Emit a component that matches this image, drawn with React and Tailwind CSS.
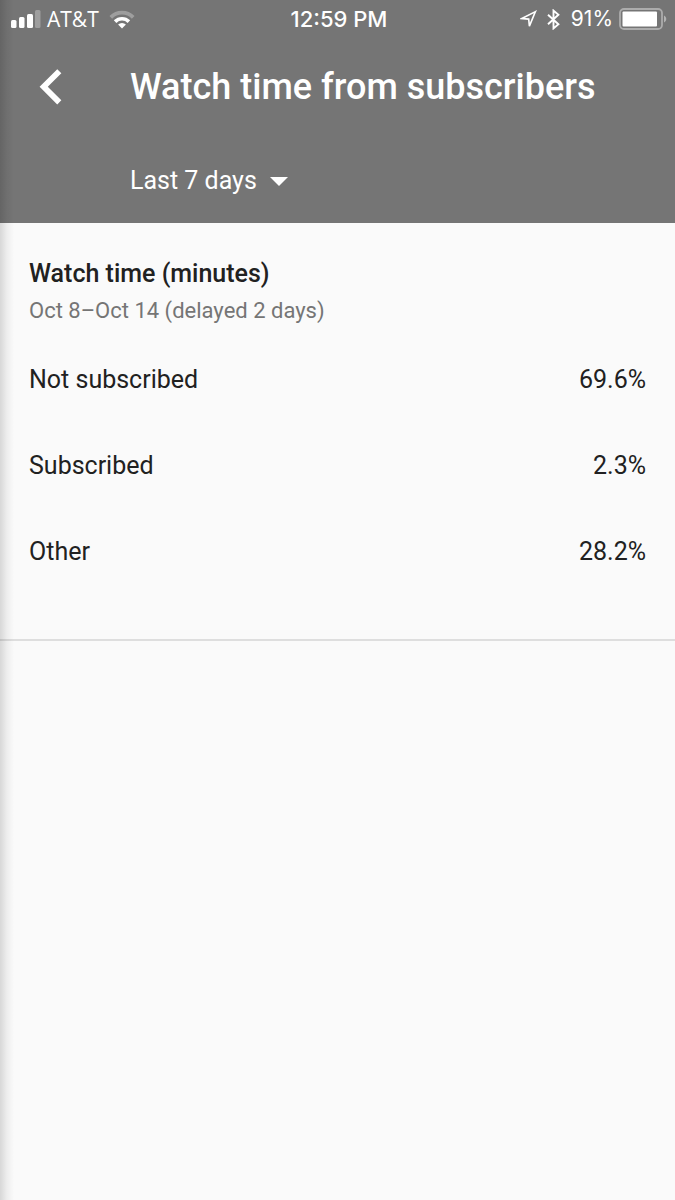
import { useState } from 'react';

const periods = ['Last 7 days', 'Last 28 days', 'Last 90 days', 'Last 365 days'];

const watchTime = [
  { label: 'Not subscribed', value: '69.6%' },
  { label: 'Subscribed', value: '2.3%' },
  { label: 'Other', value: '28.2%' },
];

function SignalIcon() {
  return (
    <svg width="30" height="18" viewBox="0 0 30 18" fill="currentColor" aria-hidden="true">
      <rect x="0" y="10" width="5.5" height="8" rx="1.5" />
      <rect x="8" y="7" width="5.5" height="11" rx="1.5" />
      <rect x="16" y="4" width="6" height="14" rx="1.5" />
      <rect x="24" y="0" width="5.5" height="18" rx="1.5" opacity="0.3" />
    </svg>
  );
}

function WifiIcon() {
  return (
    <svg width="26" height="19" viewBox="0 0 26 19" fill="none" stroke="currentColor" aria-hidden="true">
      <path d="M1.8 7.3a15.8 15.8 0 0 1 22.4 0" strokeWidth="3.8" opacity="0.3" />
      <path d="M6.1 11.6a9.8 9.8 0 0 1 13.8 0" strokeWidth="3.6" />
      <path d="M13 18.6l-3.9-4a5.5 5.5 0 0 1 7.8 0z" fill="currentColor" stroke="none" />
    </svg>
  );
}

function LocationIcon() {
  return (
    <svg width="17" height="18" viewBox="0 0 17 18" fill="none" stroke="currentColor" strokeWidth="1.6" aria-hidden="true">
      <path d="M15.4 1.6L1.8 8.5l6.9.6.7 7z" strokeLinejoin="miter" />
    </svg>
  );
}

function BluetoothIcon() {
  return (
    <svg width="13" height="21" viewBox="0 0 13 21" fill="none" stroke="currentColor" strokeWidth="1.9" aria-hidden="true">
      <path d="M1 5.8l10.4 9.5-4.9 4.1V1.6l4.9 4.1L1 15.2" />
    </svg>
  );
}

function BatteryIcon() {
  return (
    <svg width="48" height="22" viewBox="0 0 48 22" aria-hidden="true">
      <rect x="1" y="1" width="42" height="20" rx="4" fill="none" stroke="white" strokeWidth="1.8" opacity="0.4" />
      <rect x="3.5" y="3.5" width="34.5" height="15" rx="1" fill="white" />
      <path d="M45 7.5c3 1.6 3 5.4 0 7z" fill="white" opacity="0.45" />
    </svg>
  );
}

function StatusBar() {
  return (
    <div className="grid h-[38px] grid-cols-[1fr_auto_1fr] items-center pr-2 pl-[11px] font-['Inter',sans-serif] text-[22px] leading-8">
      <div className="flex items-center">
        <SignalIcon />
        <span className="mr-2.5 ml-1.5 font-['Open_Sans',sans-serif] text-[21px]">AT&amp;T</span>
        <WifiIcon />
      </div>
      <span className="font-medium">12:59 PM</span>
      <div className="flex items-center justify-end">
        <LocationIcon />
        <span className="mr-[11px] ml-2.5">
          <BluetoothIcon />
        </span>
        <span className="mr-1.5 text-[21px]">91%</span>
        <BatteryIcon />
      </div>
    </div>
  );
}

export default function App() {
  const [period, setPeriod] = useState('Last 7 days');

  return (
    <div className="relative min-h-screen bg-[#fafafa] font-['Roboto',sans-serif] text-[#212121]">
      <header className="bg-[#757575] text-white">
        <StatusBar />

        <div className="flex h-[98px] items-center">
          <button type="button" aria-label="Back" className="flex w-[130px] shrink-0 pl-[37px]">
            <svg width="26" height="38" viewBox="0 0 26 38" fill="none" stroke="currentColor" strokeWidth="5.8">
              <path d="M22.3 3.2L6.7 18.8l15.6 15.6" />
            </svg>
          </button>
          <h1 className="text-[36px] leading-10 font-medium">Watch time from subscribers</h1>
        </div>

        <div className="pt-[26px] pb-[23px] pl-[130px]">
          <div className="flex h-[38px] items-center gap-[13px]">
            <select
              aria-label="Period"
              value={period}
              onChange={(e) => setPeriod(e.target.value)}
              className="field-sizing-content appearance-none bg-transparent text-[25px] leading-8"
            >
              {periods.map((name) => (
                <option key={name} className="text-black">
                  {name}
                </option>
              ))}
            </select>
            <svg width="18" height="9" viewBox="0 0 18 9" fill="currentColor" className="pointer-events-none" aria-hidden="true">
              <path d="M0 0h18L9 9z" />
            </svg>
          </div>
        </div>
      </header>

      <section className="border-b-2 border-[#dedede] px-[29px] pt-[35px] pb-11">
        <h2 className="text-[25px] leading-8 font-medium">Watch time (minutes)</h2>
        <p className="mt-[5px] text-[22px] leading-8 text-[#757575]">Oct 8–Oct 14 (delayed 2 days)</p>

        <table className="mt-2.5 w-full text-[25px] leading-8">
          <tbody>
            {watchTime.map((row) => (
              <tr key={row.label} className="h-[86px]">
                <th scope="row" className="text-left font-normal">
                  {row.label}
                </th>
                <td className="text-right">{row.value}</td>
              </tr>
            ))}
          </tbody>
        </table>
      </section>

      {/* shadow along the left edge */}
      <div className="pointer-events-none absolute inset-y-0 left-0 w-3.5 bg-linear-to-r from-black/14 via-black/5 to-transparent" />
    </div>
  );
}
